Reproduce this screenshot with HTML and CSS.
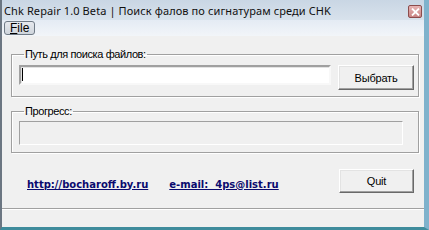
FILE: index.html
```html
<!DOCTYPE html>
<html>
<head>
<meta charset="utf-8">
<link rel="stylesheet" href="styles.css">
</head>
<body>
<div class="window">
  <div class="titlebar">
    <span class="title">Chk Repair 1.0 Beta | Поиск фалов по сигнатурам среди CHK</span>
    <span class="close"><svg width="9" height="8" viewBox="0 0 9 8"><path d="M1 0.5 L8 7.5 M8 0.5 L1 7.5" stroke="#fff" stroke-width="1.8"/></svg></span>
  </div>
  <div class="menubar">
    <span class="menu-item"><u>F</u>ile</span>
  </div>
  <div class="client">
    <fieldset class="group group-path">
      <legend>Путь для поиска файлов:</legend>
      <div class="path-row">
        <div class="input"><span class="caret"></span></div>
        <div class="button btn-browse">Выбрать</div>
      </div>
    </fieldset>
    <fieldset class="group group-progress">
      <legend>Прогресс:</legend>
      <div class="progress"></div>
    </fieldset>
    <div class="bottom-row">
      <a class="link link-site">http://bocharoff.by.ru</a>
      <a class="link link-mail">e-mail:&nbsp; 4ps@list.ru</a>
      <div class="button btn-quit">Quit</div>
    </div>
    <div class="statusbar"></div>
  </div>
</div>
</body>
</html>
```
FILE: styles.css
```css
* { box-sizing: border-box; }
html, body { margin: 0; padding: 0; }
body { width: 429px; height: 230px; overflow: hidden; background: #f0f0f0; }

.window {
  width: 429px;
  height: 230px;
  display: flex;
  flex-direction: column;
  border-left: 2px solid #6b7682;
  border-right: 5px solid #7fb2cc;
  border-bottom: 3px solid #3f8c9c;
  background: #f0f0f0;
  font-family: "Liberation Sans", Arial, sans-serif;
  font-size: 11px;
  color: #000;
}

.titlebar {
  height: 20px;
  display: flex;
  align-items: center;
  justify-content: space-between;
  padding: 0 2px 0 2px;
  background: linear-gradient(#c9d6e4, #d8e2ec);
}
.title {
  font-family: "Noto Sans", "Open Sans", sans-serif;
  font-size: 11px;
  color: #101010;
  white-space: nowrap;
  letter-spacing: 0.1px;
}
.close {
  width: 14px;
  height: 13px;
  margin-top: 3px;
  display: flex;
  align-items: center;
  justify-content: center;
  border: 1px solid #8c4c4c;
  border-radius: 2px;
  background: linear-gradient(#e8b4b4, #c98585);
}

.menubar {
  height: 16px;
  display: flex;
  align-items: center;
  padding-left: 2px;
  background: linear-gradient(#e4ebf4, #f2f5f9);
}
.menu-item {
  height: 14px;
  padding: 0 5px;
  display: flex;
  align-items: center;
  border: 1px solid #6f7a86;
  border-radius: 3px;
  background: linear-gradient(#e6e9ee, #cfd5dc);
  font-family: "Liberation Sans", Arial, sans-serif;
  font-size: 12px;
}

.client {
  flex: 1;
  display: flex;
  flex-direction: column;
  padding: 12px 5px 0 9px;
}

.group {
  margin: 0;
  border: 1px solid #a0a0a0;
  box-shadow: 1px 1px 0 #fff, inset 1px 1px 0 #fff;
  min-width: 0;
}
.group legend {
  padding: 0 1px;
  margin-left: 5px;
  line-height: 13px;
  font-size: 11px;
  letter-spacing: -0.4px;
}
.group-path { padding: 4px 4px 6px 7px; }
.group-progress { padding: 3px 15px 7px 7px; margin-top: 8px; }

.path-row {
  display: flex;
  align-items: flex-start;
  gap: 7px;
}
.input {
  width: 312px;
  height: 20px;
  background: #fff;
  border: 2px solid;
  border-color: #a0a0a0 #f8f8f8 #f8f8f8 #a0a0a0;
  box-shadow: inset 1px 1px 0 #e3e3e3;
  padding: 1px 0 0 1px;
}
.caret {
  display: block;
  width: 1px;
  height: 13px;
  background: #000;
}

.button {
  display: flex;
  align-items: center;
  justify-content: center;
  background: #f0f0f0;
  border: 1px solid;
  border-color: #fff #696969 #696969 #fff;
  box-shadow: inset -1px -1px 0 #a0a0a0, inset 1px 1px 0 #e3e3e3;
  font-size: 11px;
  letter-spacing: -0.2px;
}
.btn-browse { width: 76px; height: 25px; }
.btn-quit { width: 75px; height: 24px; margin-left: auto; }

.progress {
  width: 384px;
  height: 24px;
  border: 1px solid;
  border-color: #a0a0a0 #fff #fff #a0a0a0;
}

.bottom-row {
  display: flex;
  align-items: center;
  margin-top: 16px;
  padding: 0 5px 0 16px;
}
.link {
  font-family: "DejaVu Sans", Verdana, sans-serif;
  font-weight: bold;
  color: #0a0a6e;
  text-decoration: underline;
  font-size: 10px;
  padding-top: 6px;
}
.link-mail { margin-left: 21px; }

.statusbar {
  margin: 15px -5px 0 -9px;
  flex: 1;
  border-top: 1px solid #a0a0a0;
  box-shadow: inset 0 1px 0 #fff;
}
```
